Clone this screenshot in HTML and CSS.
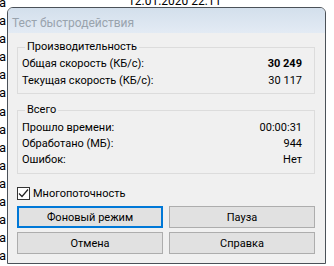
FILE: index.html
```html
<!DOCTYPE html>
<html lang="ru">
<head>
  <meta charset="UTF-8">
  <title>Тест быстродействия</title>
  <link rel="stylesheet" href="styles.css">
</head>
<body>
  <div class="desktop">
    <div class="date">12.01.2020 22:11</div>
    <div class="names">
      <div>а</div><div>а</div><div>а</div><div>а</div><div>а</div>
      <div>а</div><div>а</div><div>а</div><div>а</div><div>а</div>
      <div>а</div><div>а</div><div>а</div><div>а</div><div>а</div>
    </div>
  </div>

  <div class="dialog">
    <div class="titlebar">Тест быстродействия</div>

    <div class="client">
      <fieldset class="group perf">
        <legend>Производительность</legend>
        <div class="row"><span>Общая скорость (КБ/с):</span><b>30 249</b></div>
        <div class="row"><span>Текущая скорость (КБ/с):</span><span>30 117</span></div>
      </fieldset>

      <fieldset class="group total">
        <legend>Всего</legend>
        <div class="row"><span>Прошло времени:</span><span>00:00:31</span></div>
        <div class="row"><span>Обработано (МБ):</span><span>944</span></div>
        <div class="row"><span>Ошибок:</span><span>Нет</span></div>
      </fieldset>

      <label class="check">
        <span class="box">
          <svg width="11" height="11" viewBox="0 0 11 11"><path d="M1 5.5 L4 8.5 L10 1.5" fill="none" stroke="#222" stroke-width="1.2"/></svg>
        </span>
        Многопоточность
      </label>

      <div class="buttons">
        <button class="btn default">Фоновый режим</button>
        <button class="btn">Пауза</button>
        <button class="btn">Отмена</button>
        <button class="btn">Справка</button>
      </div>
    </div>
  </div>
</body>
</html>
```

FILE: styles.css
```css
body {
  margin: 0;
  background: #fff;
  font-family: Roboto, "Liberation Sans", Arial, sans-serif;
  font-size: 11px;
  color: #000;
  overflow: hidden;
}

.desktop {
  position: relative;
  display: flow-root;
  height: 266px;
}

.date {
  position: absolute;
  left: 128px;
  top: -5px;
  font-size: 12px;
  line-height: 12px;
}

.names {
  margin-top: -6px;
  line-height: 18.1px;
  font-size: 13px;
  margin-left: -1px;
}

.dialog {
  position: absolute;
  left: 7px;
  top: 7px;
  width: 317px;
  height: 255px;
  border: 1px solid #4b5158;
  border-radius: 6px 6px 0 0;
  background: #f0f0f0;
  display: flex;
  flex-direction: column;
}

.titlebar {
  height: 25px;
  line-height: 31px;
  padding-left: 4px;
  font-size: 12px;
  color: #99a3ad;
  background: linear-gradient(#d3dfec, #e3ebf4);
  border-radius: 5px 5px 0 0;
}

.client {
  padding: 7px 10px 0 9px;
}

.group {
  margin: 0;
  border: 1px solid #dcdcdc;
  padding: 1px 12px 2px 4px;
}

.group legend {
  margin-left: 3px;
  padding: 0 2px;
  line-height: 14px;
}

.perf .row {
  height: 17px;
  line-height: 17px;
}

.perf {
  padding-bottom: 4px;
}

.total {
  margin-top: 9px;
  padding-top: 3px;
  padding-bottom: 5px;
}

.total .row {
  height: 16px;
  line-height: 16px;
}

.row {
  display: flex;
  justify-content: space-between;
}

.check {
  display: flex;
  align-items: center;
  gap: 3px;
  margin-top: 13px;
  height: 13px;
}

.box {
  width: 11px;
  height: 11px;
  border: 1px solid #333;
  background: #fff;
  display: flex;
}

.buttons {
  display: grid;
  grid-template-columns: 1fr 1fr;
  column-gap: 6px;
  row-gap: 4px;
  margin-top: 6px;
}

.btn {
  height: 22px;
  margin: 0;
  padding: 0;
  font-family: inherit;
  font-size: 11px;
  color: #000;
  background: #e1e1e1;
  border: 1px solid #adadad;
}

.btn.default {
  border: 2px solid #0078d7;
}
```
